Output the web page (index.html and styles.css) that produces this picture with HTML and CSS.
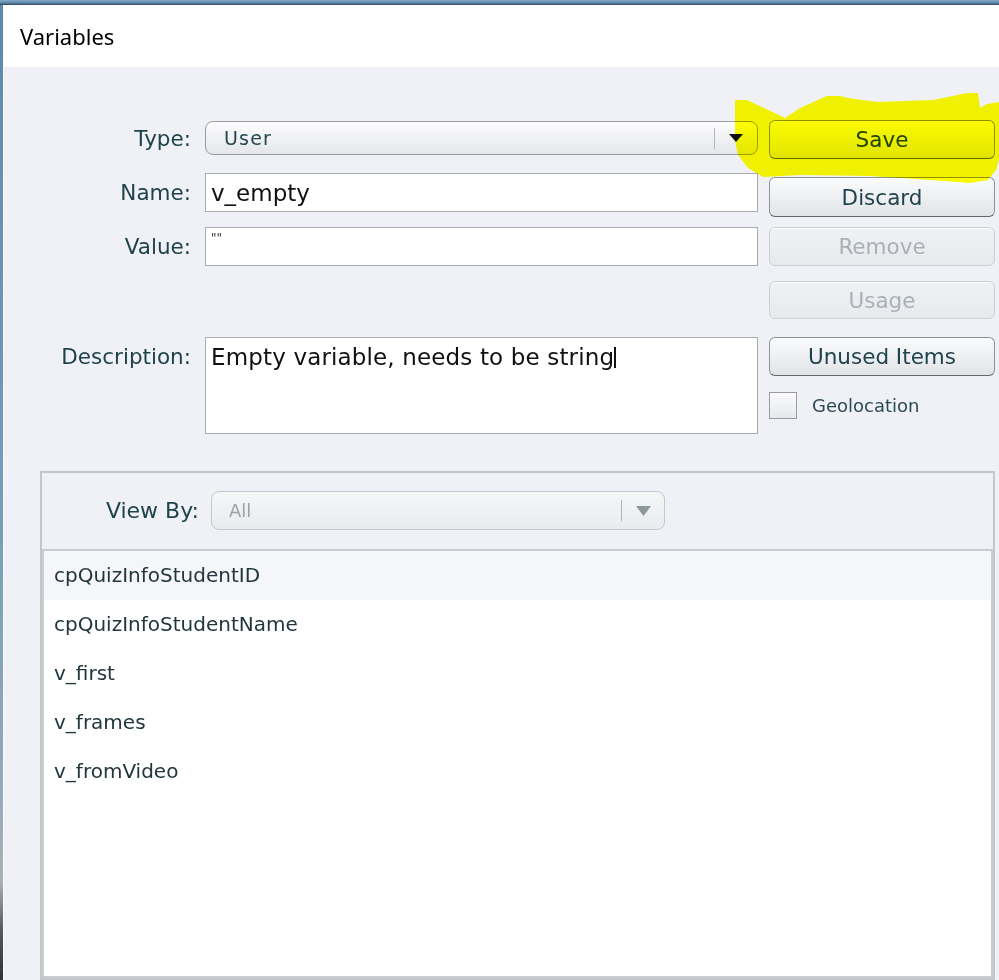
FILE: index.html
```html
<!DOCTYPE html>
<html>
<head>
<meta charset="utf-8">
<title>Variables</title>
<link rel="stylesheet" href="styles.css">
</head>
<body>
<div class="screen">
  <div class="frame-top"></div>
  <div class="main">
    <div class="frame-left"></div>
    <div class="dialog">
      <div class="titlebar">Variables</div>
      <div class="body">
        <div class="top">
          <div class="fields">
            <div class="row row-type">
              <span class="lbl">Type:</span>
              <div class="select type-select">
                <span class="select-text user-text">User</span>
                <span class="select-sep"></span>
                <span class="select-arrow"><svg width="14" height="8" viewBox="0 0 14 8"><path d="M0 0H14L7 8Z" fill="#111"/></svg></span>
              </div>
            </div>
            <div class="row row-name">
              <span class="lbl">Name:</span>
              <div class="input">v_empty</div>
            </div>
            <div class="row row-value">
              <span class="lbl">Value:</span>
              <div class="input input-value"><span class="quotes">""</span></div>
            </div>
            <div class="row row-desc">
              <span class="lbl lbl-desc">Description:</span>
              <div class="textarea">Empty variable, needs to be string<span class="caret"></span></div>
            </div>
          </div>
          <div class="buttons">
            <div class="btn btn-save">Save</div>
            <div class="btn btn-discard">Discard</div>
            <div class="btn btn-disabled btn-remove">Remove</div>
            <div class="btn btn-disabled btn-usage">Usage</div>
            <div class="btn btn-unused">Unused Items</div>
            <div class="geo">
              <span class="checkbox"></span>
              <span class="geo-label">Geolocation</span>
            </div>
          </div>
        </div>
        <div class="panel">
          <div class="panel-head">
            <span class="lbl lbl-view">View By:</span>
            <div class="select view-select">
              <span class="select-text all-text">All</span>
              <span class="select-sep"></span>
              <span class="select-arrow"><svg width="15" height="10" viewBox="0 0 15 10"><path d="M0 0H15L7.5 10Z" fill="#8e9799"/></svg></span>
            </div>
          </div>
          <ul class="list">
            <li class="item item-hover">cpQuizInfoStudentID</li>
            <li class="item">cpQuizInfoStudentName</li>
            <li class="item">v_first</li>
            <li class="item">v_frames</li>
            <li class="item">v_fromVideo</li>
          </ul>
        </div>
      </div>
    </div>
  </div>
  <svg class="highlight" width="999" height="200" viewBox="0 0 999 200">
    <path d="M735 100 L747 100 L785 118 L800 108 L827 96 L840 96 L848 98 L862 100 L878 102 L933 100 L948 97 L967 93 L978 93 L980 108 L987 104 L999 102 L999 160 L996 170 L988 180 L970 183 L930 180 L870 176 L800 175 L763 177 L748 168 L738 155 L735 140 Z" fill="#ffff00"/>
  </svg>
</div>
</body>
</html>
```
FILE: styles.css
```css
* {
  box-sizing: border-box;
  margin: 0;
  padding: 0;
}

html, body {
  width: 999px;
  height: 980px;
  overflow: hidden;
}

body {
  font-family: "DejaVu Sans", Verdana, sans-serif;
  background: #fafafa;
}

.screen {
  position: relative;
  width: 999px;
  height: 980px;
  display: flex;
  flex-direction: column;
}

.frame-top {
  height: 5px;
  background: linear-gradient(#86abc8, #5b85a6 60%, #2f4252);
}

.main {
  flex: 1;
  display: flex;
  min-height: 0;
}

.frame-left {
  width: 3px;
  background: linear-gradient(#5d89ab, #6f98b6 40%, #8aa7bc 75%, #a8b0b6 90%, #55585b 95%, #303234);
}

.dialog {
  flex: 1;
  display: flex;
  flex-direction: column;
  border-left: 1px solid #fbfbfb;
  background: #fff;
}

.titlebar {
  height: 62px;
  flex: none;
  background: #fff;
  padding-left: 16px;
  display: flex;
  align-items: center;
  font-family: "Noto Sans", sans-serif;
  font-size: 22px;
  color: #000;
}

.body {
  flex: 1;
  background: #f0f1f6;
  padding-top: 53px;
}

.top {
  display: flex;
  align-items: flex-start;
}

.fields {
  width: 754px;
  display: flex;
  flex-direction: column;
}

.row {
  display: flex;
  align-items: center;
}

.lbl {
  width: 187px;
  margin-right: 14px;
  text-align: right;
  font-size: 21.5px;
  color: #1f434b;
  white-space: nowrap;
}

.row-type {
  margin-top: 1px;
}

.row-name {
  margin-top: 18px;
}

.row-value {
  margin-top: 15px;
}

.row-desc {
  margin-top: 71px;
  align-items: flex-start;
}

.lbl-desc {
  padding-top: 7px;
}

.select {
  display: flex;
  align-items: center;
  border: 1px solid #999da2;
  border-radius: 8px;
  background: linear-gradient(#fdfdfe, #e4e6ea);
}

.type-select {
  width: 553px;
  height: 34px;
}

.select-text {
  flex: 1;
  white-space: nowrap;
}

.user-text {
  padding-left: 18px;
  font-size: 19px;
  letter-spacing: 1.2px;
  color: #23474f;
}

.select-sep {
  width: 1px;
  height: 21px;
  background: #b3b6ba;
}

.select-arrow {
  width: 42px;
  display: flex;
  align-items: center;
  justify-content: center;
}

.select-arrow svg {
  display: block;
}

.input {
  width: 553px;
  height: 39px;
  background: #fff;
  border: 1px solid #a9acb0;
  padding-left: 5px;
  display: flex;
  align-items: center;
  font-size: 23px;
  color: #111;
}

.input-value {
  align-items: flex-start;
}

.quotes {
  font-size: 12px;
  line-height: 1;
  padding-top: 4px;
  color: #333;
}

.textarea {
  width: 553px;
  height: 97px;
  background: #fff;
  border: 1px solid #a9acb0;
  padding: 7px 5px 0;
  font-size: 23px;
  line-height: 24px;
  letter-spacing: 0.15px;
  color: #111;
  white-space: nowrap;
}

.caret {
  display: inline-block;
  width: 2px;
  height: 21px;
  background: #111;
  vertical-align: -3px;
}

.buttons {
  margin-left: 11px;
  width: 226px;
  display: flex;
  flex-direction: column;
}

.btn {
  height: 39px;
  border: 1px solid #8e9296;
  border-bottom-color: #63686c;
  border-radius: 6px;
  background: linear-gradient(#fafbfc, #e2e4e8);
  box-shadow: inset 0 1px 0 #fff;
  display: flex;
  align-items: center;
  justify-content: center;
  font-size: 21.5px;
  color: #1f434c;
}

.btn-discard {
  margin-top: 18px;
  height: 40px;
}

.btn-remove {
  margin-top: 10px;
}

.btn-usage {
  margin-top: 15px;
  height: 38px;
}

.btn-unused {
  margin-top: 18px;
}

.btn-disabled {
  border-color: #cbced2;
  background: linear-gradient(#f0f1f5, #e7e9ed);
  color: #a8b2b6;
}

.geo {
  margin-top: 16px;
  display: flex;
  align-items: center;
}

.checkbox {
  width: 28px;
  height: 27px;
  border: 1px solid #979b9f;
  background: linear-gradient(#fbfbfc, #e6e8eb);
}

.geo-label {
  margin-left: 15px;
  font-size: 18px;
  color: #2a4a52;
}

.panel {
  margin-top: 37px;
  margin-left: 36px;
  width: 955px;
  height: 509px;
  border: 2px solid #c3c6ca;
  display: flex;
  flex-direction: column;
}

.panel-head {
  height: 76px;
  flex: none;
  display: flex;
  align-items: flex-start;
  padding-top: 18px;
}

.lbl-view {
  width: 157px;
  margin-right: 12px;
  line-height: 39px;
  font-size: 22px;
}

.view-select {
  width: 454px;
  height: 39px;
  border-color: #c4c7cb;
  background: linear-gradient(#f5f6f8, #e9ebee);
}

.all-text {
  padding-left: 17px;
  font-size: 18px;
  color: #9aa3a7;
}

.list {
  flex: 1;
  list-style: none;
  background: #fff;
  border: 2px solid #c9ccd0;
}

.item {
  height: 49px;
  line-height: 49px;
  padding-left: 10px;
  font-size: 20px;
  color: #22363d;
}

.item-hover {
  background: #f5f6fa;
}

.highlight {
  position: absolute;
  left: 0;
  top: 0;
  mix-blend-mode: multiply;
  pointer-events: none;
}
```
